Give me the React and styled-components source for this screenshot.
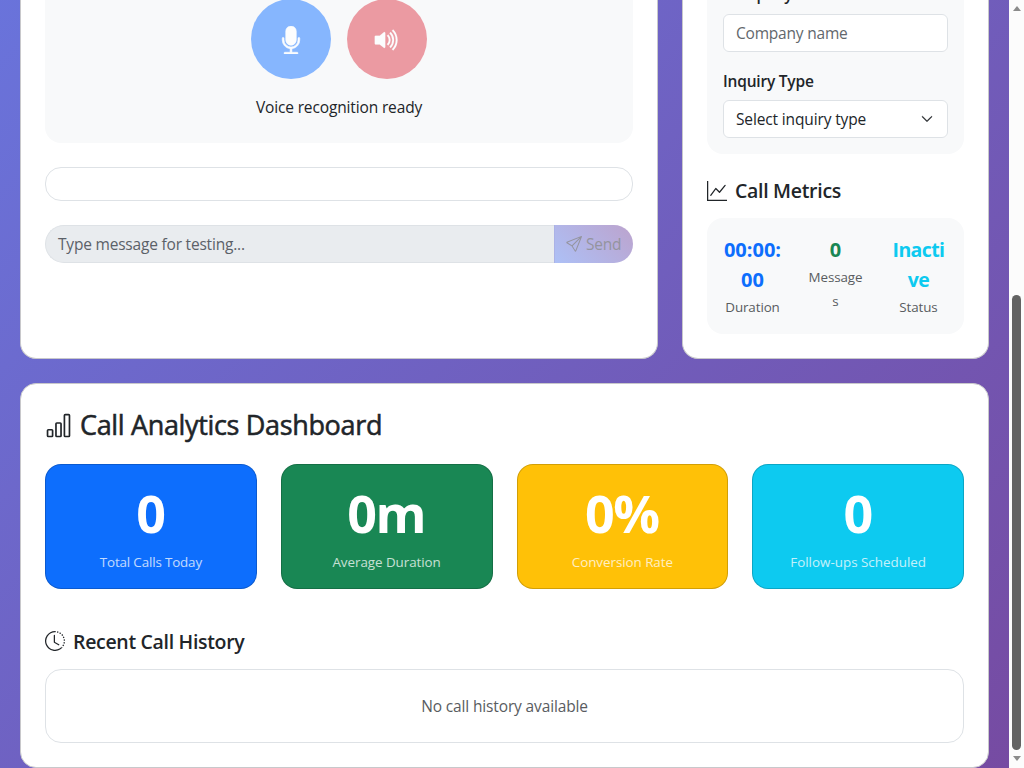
import React from "react";
import styled, { createGlobalStyle } from "styled-components";
import {
  BsMicFill,
  BsVolumeUpFill,
  BsSend,
  BsGraphUp,
  BsBarChart,
  BsClockHistory,
  BsChevronDown,
} from "react-icons/bs";

const GlobalStyle = createGlobalStyle`
  *, *::before, *::after { box-sizing: border-box; }
  body {
    margin: 0;
    overflow: hidden;
    font-family: "Segoe UI", "Open Sans", "Noto Sans", sans-serif;
    font-size: 15.5px;
    line-height: 24px;
    color: #212529;
  }
`;

const Viewport = styled.div`
  display: flex;
  width: 1024px;
  height: 768px;
  overflow: hidden;
`;

const Page = styled.main`
  flex: 1;
  height: 768px;
  overflow: hidden;
  padding: 0 20px;
  display: flex;
  flex-direction: column;
  gap: 24px;
  background: linear-gradient(135deg, #667eea 0%, #764ba2 100%) bottom / 100% 1240px no-repeat;
`;

const Columns = styled.div`
  display: grid;
  grid-template-columns: 638px 307px;
  gap: 24px;
  height: 359px;
`;

const Panel = styled.section`
  background: #fff;
  border: 1px solid #c8c8cb;
  border-radius: ${(p) => (p.$scrolled ? "0 0 16px 16px" : "16px")};
  ${(p) => p.$scrolled && "border-top: 0; overflow: hidden;"}
  padding: ${(p) => (p.$scrolled ? "0 24px" : "24px")};
  height: ${(p) => (p.$scrolled ? "359px" : "385px")};
`;

const VoiceArea = styled.div`
  height: 143px;
  margin-bottom: 24px;
  background: #f8f9fa;
  border-radius: 0 0 16px 16px;
  text-align: center;
`;

const VoiceButtons = styled.div`
  display: flex;
  justify-content: center;
  gap: 16px;
  margin-bottom: 16px;
`;

const RoundButton = styled.button`
  display: flex;
  align-items: center;
  justify-content: center;
  width: 80px;
  height: 80px;
  margin-top: -1px;
  padding: 1px 0 0;
  border: 0;
  border-radius: 50%;
  background: ${(p) => p.$color};
  color: #fcfdfe;
`;

const Label = styled.div`
  letter-spacing: -0.14px;
`;

const Transcript = styled.div`
  height: 34px;
  margin-bottom: 24px;
  border: 1px solid #dee2e6;
  border-radius: 16px;
`;

const MessageRow = styled.div`
  display: flex;
  height: 38px;
`;

const MessageField = styled.div`
  flex: 1;
  padding: 6px 12px;
  border: 1px solid #dee2e6;
  border-right: 0;
  border-radius: 19px 0 0 19px;
  background: #e9ecef;
  color: #5b6168;
  letter-spacing: -0.2px;
`;

const SendButton = styled.button`
  display: flex;
  align-items: center;
  gap: 4px;
  width: 79px;
  padding: 0 0 0 11px;
  border: 0;
  border-left: 1px solid #abb2e6;
  border-radius: 0 19px 19px 0;
  background: linear-gradient(45deg, #adc0f6, #bca3cd);
  color: #94949e;
  font: inherit;
  letter-spacing: -0.2px;
`;

const FormBox = styled.div`
  height: 154px;
  padding: 0 16px;
  margin-bottom: 25px;
  overflow: hidden;
  background: #f8f9fa;
  border-radius: 0 0 16px 16px;
`;

const FieldLabel = styled.label`
  display: block;
  height: 24px;
  margin-top: ${(p) => p.$top}px;
  margin-bottom: ${(p) => p.$bottom}px;
  font-weight: 600;
  letter-spacing: -0.2px;
`;

const Field = styled.div`
  display: flex;
  align-items: center;
  justify-content: space-between;
  height: 38px;
  padding: 0 14px 0 12px;
  border: 1px solid #dee2e6;
  border-radius: 6px;
  background: #fff;
  color: ${(p) => (p.$placeholder ? "#62676c" : "#212529")};
  letter-spacing: ${(p) => (p.$placeholder ? -0.2 : -0.14)}px;
`;

const Heading = styled.h5`
  display: flex;
  align-items: center;
  gap: 8px;
  height: 24px;
  margin: 0 0 ${(p) => p.$bottom}px;
  font-size: 19.5px;
  font-weight: 600;
  letter-spacing: ${(p) => p.$track}px;
`;

const HeadingText = styled.span`
  padding-top: ${(p) => p.$drop || 0}px;
`;

const PageHeading = styled.h3`
  display: flex;
  align-items: center;
  gap: 8px;
  height: 34px;
  margin: 0 0 22px;
  font-size: 27px;
  font-weight: 400;
  letter-spacing: -0.34px;
  -webkit-text-stroke: 0.55px #212529;
`;

const Metrics = styled.div`
  display: grid;
  grid-template-columns: repeat(3, 59px);
  gap: 24px;
  height: 116px;
  padding: 17px 16px 15px;
  background: #f8f9fa;
  border-radius: 16px;
  text-align: center;
  white-space: nowrap;
`;

const MetricValue = styled.div`
  display: flex;
  flex-direction: column;
  align-items: center;
  font-size: ${(p) => p.$size || 20}px;
  font-weight: 700;
  line-height: 30px;
  color: ${(p) => p.$color};
  letter-spacing: ${(p) => p.$track || 0}px;
`;

const MetricLabel = styled.div`
  display: flex;
  flex-direction: column;
  align-items: center;
  font-size: 13.4px;
  line-height: 24px;
  color: #595c5f;
  letter-spacing: -0.1px;
`;

const Stats = styled.div`
  display: grid;
  grid-template-columns: repeat(4, 1fr);
  gap: 24px;
  margin-bottom: 40px;
`;

const StatCard = styled.div`
  height: 125px;
  padding-top: 15px;
  border: 1px solid rgba(0, 0, 0, 0.175);
  border-radius: 16px;
  background: ${(p) => p.$color};
  color: #fff;
  text-align: center;
`;

const StatValue = styled.div`
  height: 70px;
  font-size: 52px;
  font-weight: 700;
  line-height: 66px;
  letter-spacing: -1.4px;
  text-indent: -1px;
`;

const StatLabel = styled.div`
  font-size: 13.4px;
  line-height: 24px;
  opacity: 0.75;
  letter-spacing: ${(p) => p.$track || 0}px;
`;

const HistoryBox = styled.div`
  display: flex;
  align-items: center;
  justify-content: center;
  height: 74px;
  border: 1px solid #dee2e6;
  border-radius: 16px;
  color: #595c5f;
  letter-spacing: -0.14px;
`;

const Scrollbar = styled.aside`
  display: flex;
  flex-direction: column;
  align-items: center;
  width: 15px;
  height: 768px;
  padding: 6px 0;
  background: #fcfcfc;
`;

const Arrow = styled.i`
  width: 0;
  height: 0;
  border: 4.5px solid transparent;
  ${(p) =>
    p.$up
      ? "border-bottom: 5px solid #8b8b8b; border-top: 0;"
      : "border-top: 5px solid #8b8b8b; border-bottom: 0;"}
`;

const Thumb = styled.div`
  width: 9px;
  height: 455px;
  margin: 284px 0 6px;
  border-radius: 5px;
  background: #636363;
`;

const STATS = [
  { value: "0", label: "Total Calls Today", color: "#0d6efd", track: -0.15 },
  { value: "0m", label: "Average Duration", color: "#198754", track: -0.05 },
  { value: "0%", label: "Conversion Rate", color: "#ffc107", track: -0.05 },
  { value: "0", label: "Follow-ups Scheduled", color: "#0dcaf0", track: 0 },
];

const METRICS = [
  { value: ["00:00:", "00"], label: ["Duration"], color: "#0d6efd" },
  { value: ["0"], label: ["Message", "s"], color: "#198754" },
  { value: ["Inacti", "ve"], label: ["Status"], color: "#0dcaf0", size: 19.5, track: -0.6 },
];

export default function App() {
  return (
    <Viewport>
      <GlobalStyle />
      <Page>
        <Columns>
          <Panel $scrolled>
            <VoiceArea>
              <VoiceButtons>
                <RoundButton $color="#86b6fe" aria-label="Microphone">
                  <BsMicFill size={28} strokeWidth={0.35} />
                </RoundButton>
                <RoundButton $color="#eb9aa2" aria-label="Speaker">
                  <BsVolumeUpFill size={28} strokeWidth={0.1} />
                </RoundButton>
              </VoiceButtons>
              <Label>Voice recognition ready</Label>
            </VoiceArea>
            <Transcript />
            <MessageRow>
              <MessageField>Type message for testing...</MessageField>
              <SendButton>
                <BsSend size={16} />
                Send
              </SendButton>
            </MessageRow>
          </Panel>
          <Panel $scrolled>
            <FormBox>
              <FieldLabel $top={-18} $bottom={8}>Company</FieldLabel>
              <Field $placeholder>Company name</Field>
              <FieldLabel $top={17} $bottom={7}>Inquiry Type</FieldLabel>
              <Field>
                Select inquiry type
                <BsChevronDown size={12} strokeWidth={0.8} />
              </Field>
            </FormBox>
            <Heading $track={-0.3} $bottom={15}>
              <BsGraphUp size={20} />
              <HeadingText>Call Metrics</HeadingText>
            </Heading>
            <Metrics>
              {METRICS.map((m) => (
                <div key={m.label[0]}>
                  <MetricValue $color={m.color} $size={m.size} $track={m.track}>
                    {m.value.map((v) => (
                      <span key={v}>{v}</span>
                    ))}
                  </MetricValue>
                  <MetricLabel>
                    {m.label.map((l) => (
                      <span key={l}>{l}</span>
                    ))}
                  </MetricLabel>
                </div>
              ))}
            </Metrics>
          </Panel>
        </Columns>
        <Panel>
          <PageHeading>
            <BsBarChart size={27} />
            <HeadingText>Call Analytics Dashboard</HeadingText>
          </PageHeading>
          <Stats>
            {STATS.map((s) => (
              <StatCard key={s.label} $color={s.color}>
                <StatValue>{s.value}</StatValue>
                <StatLabel $track={s.track}>{s.label}</StatLabel>
              </StatCard>
            ))}
          </Stats>
          <Heading $track={-0.32} $bottom={16}>
            <BsClockHistory size={20} />
            <HeadingText $drop={2}>Recent Call History</HeadingText>
          </Heading>
          <HistoryBox>No call history available</HistoryBox>
        </Panel>
      </Page>
      <Scrollbar>
        <Arrow $up />
        <Thumb />
        <Arrow />
      </Scrollbar>
    </Viewport>
  );
}
